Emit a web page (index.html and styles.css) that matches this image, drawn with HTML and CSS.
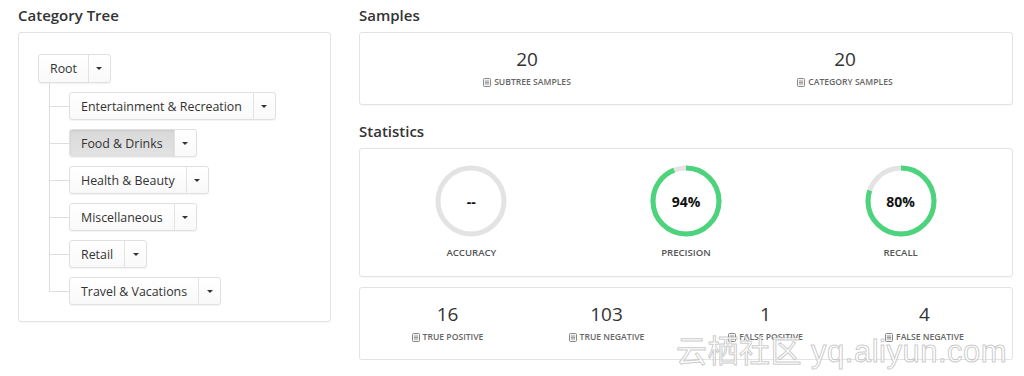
FILE: index.html
```html
<!DOCTYPE html>
<html lang="en">
<head>
    <meta charset="UTF-8">
    <meta name="viewport" content="width=device-width, initial-scale=1.0">
    <title>Category Statistics</title>
    <link rel="stylesheet" href="styles.css">
</head>
<body>
    <div class="page">
        <div class="column">
            <h3>Category Tree</h3>
            <div class="panel tree-panel">
                <div class="btn-group root">
                    <span class="btn label">Root</span>
                    <span class="btn caret-btn"><i class="caret"></i></span>
                </div>
                <ul class="tree">
                    <li><div class="btn-group"><span class="btn label">Entertainment &amp; Recreation</span><span class="btn caret-btn"><i class="caret"></i></span></div></li>
                    <li><div class="btn-group"><span class="btn label active">Food &amp; Drinks</span><span class="btn caret-btn"><i class="caret"></i></span></div></li>
                    <li><div class="btn-group"><span class="btn label">Health &amp; Beauty</span><span class="btn caret-btn"><i class="caret"></i></span></div></li>
                    <li><div class="btn-group"><span class="btn label">Miscellaneous</span><span class="btn caret-btn"><i class="caret"></i></span></div></li>
                    <li><div class="btn-group"><span class="btn label">Retail</span><span class="btn caret-btn"><i class="caret"></i></span></div></li>
                    <li><div class="btn-group"><span class="btn label">Travel &amp; Vacations</span><span class="btn caret-btn"><i class="caret"></i></span></div></li>
                </ul>
            </div>
        </div>

        <div class="column">
            <h3>Samples</h3>
            <div class="panel counts two">
                <div class="count" data-value="20" data-label="Subtree Samples"></div>
                <div class="count" data-value="20" data-label="Category Samples"></div>
            </div>

            <h3 class="spaced">Statistics</h3>
            <div class="panel rings">
                <div class="ring-item" data-value="" data-label="Accuracy"></div>
                <div class="ring-item" data-value="94" data-label="Precision"></div>
                <div class="ring-item" data-value="80" data-label="Recall"></div>
            </div>

            <div class="panel counts four">
                <div class="count" data-value="16" data-label="True Positive"></div>
                <div class="count" data-value="103" data-label="True Negative"></div>
                <div class="count" data-value="1" data-label="False Positive"></div>
                <div class="count" data-value="4" data-label="False Negative"></div>
            </div>
        </div>
    </div>

    <div class="watermark">云栖社区 yq.aliyun.com</div>

    <script>
        // Small book icon used in front of the count labels
        const bookIcon = `
            <svg class="book" width="8" height="9" viewBox="0 0 8 9">
                <rect x="0.5" y="0.5" width="7" height="8" rx="1" fill="#f4f4f4" stroke="#888"/>
                <line x1="2" y1="3" x2="6" y2="3" stroke="#999"/>
                <line x1="2" y1="4.5" x2="6" y2="4.5" stroke="#999"/>
                <line x1="2" y1="6" x2="6" y2="6" stroke="#999"/>
            </svg>`;

        document.querySelectorAll('.count').forEach(item => {
            item.innerHTML = `
                <div class="count-value">${item.dataset.value}</div>
                <div class="count-label">${bookIcon}${item.dataset.label}</div>
            `;
        });

        // Progress rings, drawn clockwise from the top
        const radius = 33;
        const length = 2 * Math.PI * radius;

        document.querySelectorAll('.ring-item').forEach(item => {
            const value = item.dataset.value;
            const filled = value === '' ? 0 : length * value / 100;
            item.innerHTML = `
                <div class="ring">
                    <svg width="72" height="72" viewBox="0 0 72 72">
                        <circle cx="36" cy="36" r="${radius}" fill="none" stroke="#e3e3e3" stroke-width="5"/>
                        <circle cx="36" cy="36" r="${radius}" fill="none" stroke="#4cd47c" stroke-width="5"
                            stroke-dasharray="${filled} ${length}" transform="rotate(-90 36 36)"/>
                    </svg>
                    <span class="ring-text">${value === '' ? '--' : value + '%'}</span>
                </div>
                <div class="ring-label">${item.dataset.label}</div>
            `;
        });
    </script>
</body>
</html>
```

FILE: styles.css
```css
* {
    margin: 0;
    padding: 0;
    box-sizing: border-box;
    font-family: 'Open Sans', sans-serif;
}

body {
    background-color: #fff;
    color: #333;
}

.page {
    display: grid;
    grid-template-columns: 313px 654px;
    gap: 28px;
    padding: 5px 11px 0 18px;
}

h3 {
    font-size: 15px;
    font-weight: 600;
    line-height: 20px;
    margin-bottom: 7px;
    color: #333;
}

h3.spaced {
    margin-top: 16px;
}

.panel {
    border: 1px solid #e3e3e3;
    border-radius: 3px;
    box-shadow: 0 1px 1px rgba(0, 0, 0, 0.03);
    background-color: #fff;
}

/* Category tree */
.tree-panel {
    padding: 21px 19px 16px;
}

.btn-group {
    display: inline-flex;
    height: 28px;
    border: 1px solid #e0e0e0;
    border-radius: 3px;
    box-shadow: 0 1px 1px rgba(0, 0, 0, 0.05);
    background: linear-gradient(#fff, #f9f9f9);
}

.btn-group.root {
    height: 29px;
}

.btn {
    display: flex;
    align-items: center;
    font-size: 12.4px;
    color: #333;
}

.label {
    padding: 0 11px 0 11px;
}

.label.active {
    background: linear-gradient(#d9d9d9, #e2e2e2);
    box-shadow: inset 0 1px 2px rgba(0, 0, 0, 0.08);
    border-radius: 2px 0 0 2px;
}

.caret-btn {
    width: 22px;
    justify-content: center;
    border-left: 1px solid #e3e3e3;
}

.caret {
    width: 0;
    height: 0;
    border-left: 3px solid transparent;
    border-right: 3px solid transparent;
    border-top: 3px solid #333;
}

.tree {
    list-style: none;
    margin-left: 11px;
}

.tree li {
    position: relative;
    padding: 9px 0 0 20px;
}

.tree li::before {
    content: '';
    position: absolute;
    left: 0;
    top: 0;
    width: 20px;
    height: 23px;
    border-left: 1px solid #dedede;
    border-bottom: 1px solid #dedede;
}

.tree li:not(:last-child)::after {
    content: '';
    position: absolute;
    left: 0;
    top: 23px;
    bottom: 0;
    border-left: 1px solid #dedede;
}

/* Counts */
.counts {
    display: grid;
    padding: 13px 8px 16px;
}

.counts.two {
    grid-template-columns: repeat(2, 1fr);
}

.counts.four {
    grid-template-columns: repeat(4, 1fr);
    margin-top: 10px;
}

.count {
    text-align: center;
}

.count-value {
    font-size: 19px;
    line-height: 26px;
    color: #333;
}

.count-label {
    display: flex;
    align-items: center;
    justify-content: center;
    gap: 3px;
    margin-top: 4px;
    font-size: 8.6px;
    line-height: 12px;
    font-weight: 600;
    text-transform: uppercase;
    color: #666;
}

/* Rings */
.rings {
    display: grid;
    grid-template-columns: repeat(3, 1fr);
    padding: 16px 4px 17px;
}

.ring-item {
    display: flex;
    flex-direction: column;
    align-items: center;
}

.ring {
    position: relative;
    width: 72px;
    height: 72px;
}

.ring svg {
    display: block;
}

.ring-text {
    position: absolute;
    inset: 0;
    display: flex;
    align-items: center;
    justify-content: center;
    font-size: 14px;
    font-weight: 700;
    color: #111;
}

.ring-label {
    margin-top: 10px;
    font-size: 9.6px;
    line-height: 12px;
    font-weight: 600;
    text-transform: uppercase;
    color: #555;
}

.watermark {
    position: absolute;
    left: 676px;
    top: 326px;
    font-family: 'Liberation Sans', 'Noto Sans CJK SC', sans-serif;
    font-size: 31px;
    color: rgba(255, 255, 255, 0.85);
    -webkit-text-stroke: 1px rgba(160, 160, 160, 0.55);
    letter-spacing: 0.5px;
    pointer-events: none;
}
```
